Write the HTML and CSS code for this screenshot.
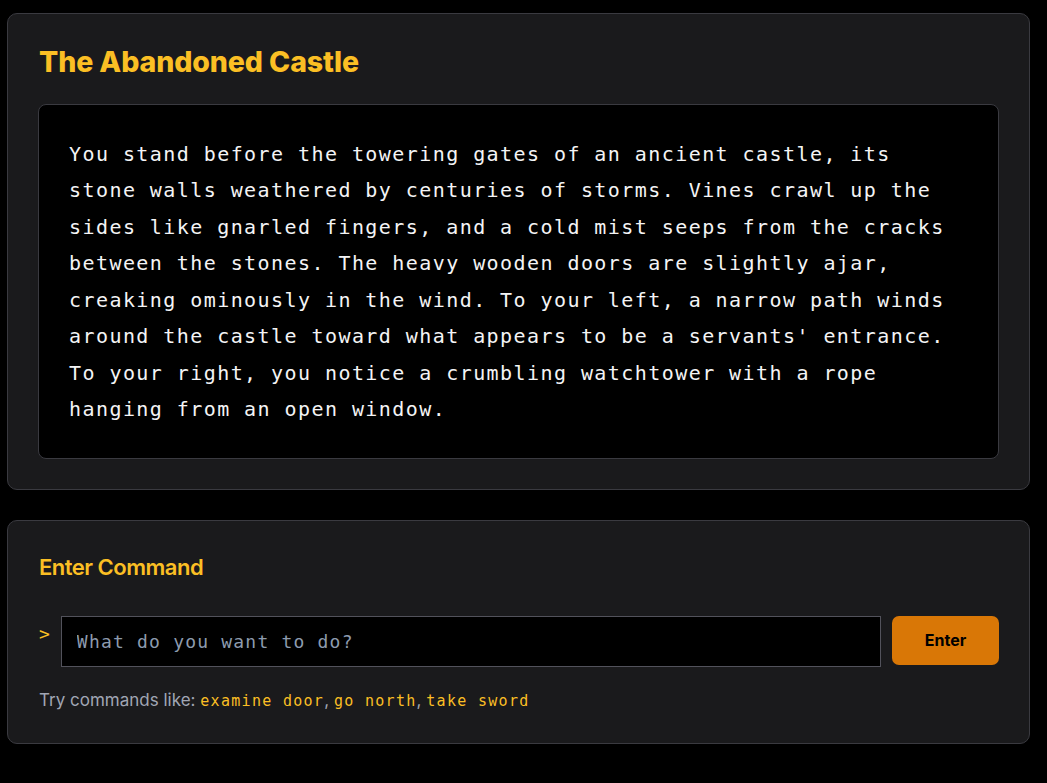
FILE: index.html
```html
<!DOCTYPE html>
<html lang="en">
<head>
<meta charset="utf-8">
<title>The Abandoned Castle</title>
<link rel="stylesheet" href="styles.css">
</head>
<body>
<main class="game">
  <section class="card scene">
    <h1 class="scene-title">The Abandoned Castle</h1>
    <div class="story">
      <p>You stand before the towering gates of an ancient castle, its stone walls weathered by centuries of storms. Vines crawl up the sides like gnarled fingers, and a cold mist seeps from the cracks between the stones. The heavy wooden doors are slightly ajar, creaking ominously in the wind. To your left, a narrow path winds around the castle toward what appears to be a servants' entrance. To your right, you notice a crumbling watchtower with a rope hanging from an open window.</p>
    </div>
  </section>
  <section class="card command">
    <h2 class="command-title">Enter Command</h2>
    <form class="command-row">
      <span class="prompt">&gt;</span>
      <input class="command-input" type="text" placeholder="What do you want to do?">
      <button class="enter-btn" type="button">Enter</button>
    </form>
    <p class="hint">Try commands like: <code>examine door</code>, <code>go north</code>, <code>take sword</code></p>
  </section>
</main>
</body>
</html>
```
FILE: styles.css
```css
html, body {
  background: #000;
}
body {
  margin: 0;
  font-family: Inter, "Noto Sans", sans-serif;
  color: #e4e4e7;
}
.game {
  margin: 13px 17px 0 7px;
  display: flex;
  flex-direction: column;
  gap: 30px;
}
.card {
  background: #1a1a1c;
  border: 1px solid #3a3a40;
  border-radius: 10px;
  padding: 30px;
}
.scene-title {
  margin: 0 0 24px 1px;
  font-size: 28.5px;
  font-weight: 800;
  letter-spacing: -0.1px;
  line-height: 36px;
  color: #fbbf24;
}
.story {
  background: #000;
  border: 1px solid #3a3a40;
  border-radius: 8px;
  padding: 31px 30px 30px;
}
.story p {
  margin: 0;
  font-family: "DejaVu Sans Mono", "Liberation Mono", monospace;
  font-size: 20px;
  letter-spacing: 1.43px;
  line-height: 36.45px;
  color: #f4f4f5;
}
.command-title {
  margin: 0 0 32px 1px;
  font-size: 22px;
  font-weight: 600;
  letter-spacing: -0.5px;
  line-height: 33px;
  color: #fbbf24;
}
.command-row {
  display: flex;
  align-items: flex-start;
  gap: 11px;
  margin: 0;
}
.prompt {
  padding: 6px 0 0 1px;
  font-family: "DejaVu Sans Mono", monospace;
  font-size: 18px;
  line-height: 24px;
  color: #fbbf24;
}
.command-input {
  flex: 1;
  min-width: 0;
  height: 51px;
  box-sizing: border-box;
  background: #000;
  border: 1px solid #52525b;
  border-radius: 0;
  padding: 0 15px;
  font-family: "DejaVu Sans Mono", monospace;
  font-size: 18px;
  letter-spacing: 1.2px;
  color: #f4f4f5;
  outline: none;
}
.command-input::placeholder {
  color: #8d9bae;
  opacity: 1;
}
.enter-btn {
  width: 107px;
  height: 49px;
  border: none;
  border-radius: 7px;
  background: #d97706;
  color: #000;
  font-family: Inter, sans-serif;
  font-size: 16px;
  font-weight: 700;
  cursor: pointer;
}
.hint {
  margin: 21px 0 0 1px;
  font-size: 17px;
  line-height: 24px;
  color: #a1a6b4;
}
.hint code {
  font-family: "DejaVu Sans Mono", monospace;
  font-size: 15px;
  letter-spacing: 1.3px;
  color: #fbbf24;
}
```
